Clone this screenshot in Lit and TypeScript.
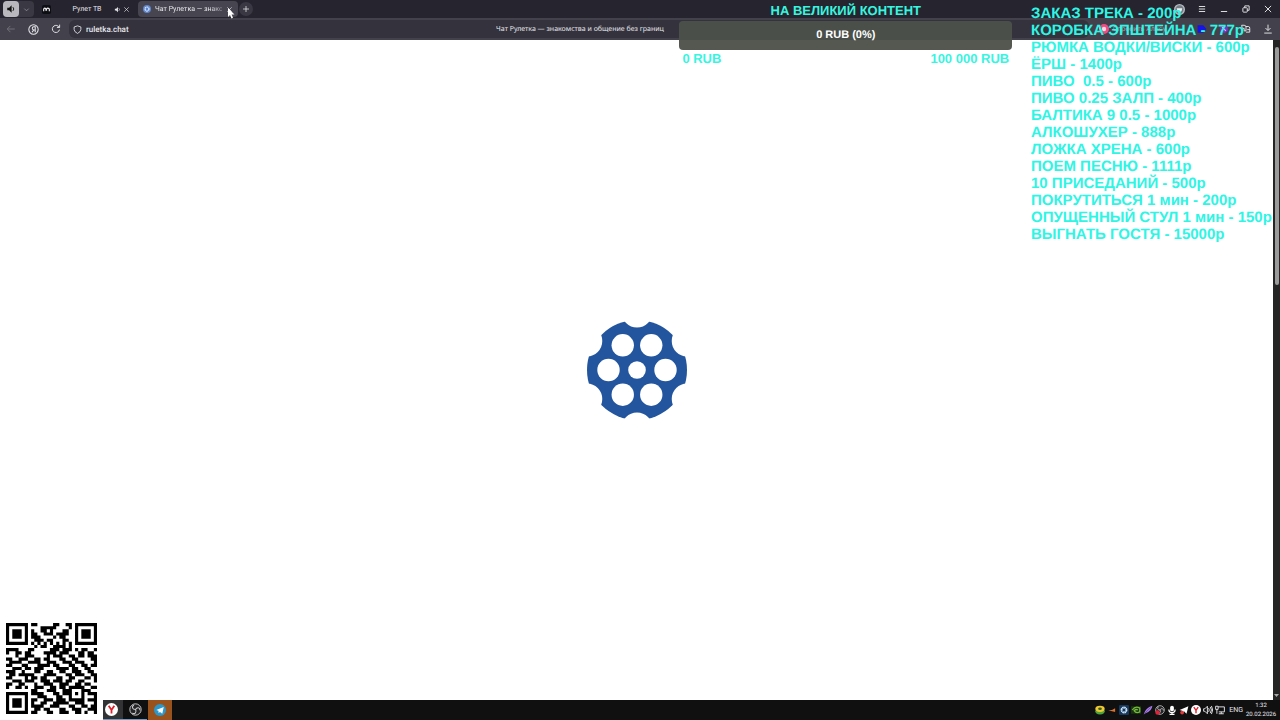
import { LitElement, html, svg, css } from "lit";
import { customElement } from "lit/decorators.js";

const PRICES = [
  "ЗАКАЗ ТРЕКА - 200р",
  "КОРОБКА ЭПШТЕЙНА - 777р",
  "РЮМКА ВОДКИ/ВИСКИ - 600р",
  "ЁРШ - 1400р",
  "ПИВО  0.5 - 600р",
  "ПИВО 0.25 ЗАЛП - 400р",
  "БАЛТИКА 9 0.5 - 1000р",
  "АЛКОШУХЕР - 888р",
  "ЛОЖКА ХРЕНА - 600р",
  "ПОЕМ ПЕСНЮ - 1111р",
  "10 ПРИСЕДАНИЙ - 500р",
  "ПОКРУТИТЬСЯ 1 мин - 200р",
  "ОПУЩЕННЫЙ СТУЛ 1 мин - 150р",
  "ВЫГНАТЬ ГОСТЯ - 15000р",
];

const QR = [
  "11111110110000011001101111111",
  "10000010000111110000101000001",
  "10111010100110100011001011101",
  "10111010110011101111001011101",
  "10111010111000010110001011101",
  "10000010011101100011001000001",
  "11111110101010101010101111111",
  "00000000010110011110100000000",
  "11110001100000111011101011001",
  "10011011000011110111000110110",
  "00010011100001011100110110111",
  "11001110011011000110011000011",
  "01111001111001110011101110001",
  "11000110001111011000110011011",
  "00111011011100001111011001100",
  "11100100011001100110011100110",
  "01101111100011110001101110011",
  "11000010110110001100110001101",
  "00111011100111011101100110001",
  "11001100010011100111001101100",
  "10011010011100110110111110011",
  "00000000110001110011100011100",
  "11111110111100011011101010111",
  "10000010001110001100100010001",
  "10111010110011101110111110111",
  "10111010100110011111001110001",
  "10111010111100111000110011011",
  "10000010011011000110011100111",
  "11111110110001100111001101001",
];

const yandex = svg`<circle cx="8" cy="8" r="8" fill="#fff"/><path d="M4.500 3.500 8 8.500l3.500-5M8 8v5" fill="none" stroke="#e0202c" stroke-width="2.200"/>`;
const obs = svg`<circle cx="8" cy="8" r="7" fill="#242426" stroke="#c9c9cb" stroke-width="1.200"/><path d="M8 8C4 8 3 4.500 6 2.500M8 8c2-3.500 5.500-2.500 5.500.8M8 8c2 3.500-.8 6-4 4.500" fill="none" stroke="#c9c9cb" stroke-width="1.400"/>`;
const icons: Record<string, unknown> = {
  sound: svg`<path d="M2 6h3l4-4v12l-4-4H2z" fill="currentColor"/><path d="M11 5q3 3 0 6" class="line"/>`,
  down: svg`<path d="m3 6 5 5 5-5" class="line"/>`,
  close: svg`<path d="m3 3 10 10M13 3 3 13" class="line"/>`,
  plus: svg`<path d="M8 2v12M2 8h12" class="line"/>`,
  back: svg`<path d="M14 8H2m5-5L2 8l5 5" class="line"/>`,
  yandexHome: svg`<circle cx="8" cy="8" r="6.800" class="line"/><path d="M10.500 12V4H8.500a2.300 2.300 0 0 0 0 4.600h2M8.300 8.600 6 12" class="line"/>`,
  reload: svg`<path d="M13.500 9a5.700 5.700 0 1 1-2-5.500L13.500 5M13.800 1v4.500H9.500" class="line"/>`,
  shield: svg`<path d="M8 1.500 14 3.500V8q0 4-6 7Q2 12 2 8V3.500z" class="line"/>`,
  menu: svg`<path d="M3 4h10M3 8h10M3 12h10" class="line"/>`,
  min: svg`<path d="M3 12h10" class="line"/>`,
  restore: svg`<rect x="3" y="6" width="7" height="7" rx="1" class="line"/><path d="M6 6V3h7v7h-3" class="line"/>`,
  download: svg`<path d="M8 1v9M4 6.500l4 4 4-4M2 14.500h12" class="line"/>`,
  ext: svg`<path d="M1 2h4q3 0 3 3v6H5V7H2zM8 4h4q2 0 2 3v6H8M10 9h4" class="line"/>`,
  site: svg`<rect width="16" height="16" rx="3" fill="#0d0d14"/><path d="M3 11V7q2-3 4 0v3M8 10V7q2-3 5 0v4" fill="none" stroke="#eee" stroke-width="2"/>`,
  roulette: svg`<circle cx="8" cy="8" r="8" fill="#5d86cf"/><circle cx="8" cy="8" r="4" fill="none" stroke="#dfe9fb" stroke-width="2.500" stroke-dasharray="3 1"/>`,
  avatar: svg`<circle cx="8" cy="8" r="7" fill="#747c84" stroke="#b3bac2" stroke-width="2"/><path d="M4 6h8l-1 4-3 3-3-3z" fill="#eef2f4"/>`,
  pink: svg`<circle cx="8" cy="8" r="8" fill="#ed4d82"/><circle cx="8" cy="8" r="3.500" fill="#ffd8e5"/>`,
  blue: svg`<path d="M1 2h9l5 6-5 6H1z" fill="#1513e6"/>`,
  purple: svg`<path d="M2 5 8 1l6 4v6l-6 4-6-4z" fill="#7434c7"/><path d="m5 5 6 6" stroke="#dcb7ff" stroke-width="2"/>`,
  yandex,
  obs,
  obsRec: svg`${obs}<circle cx="4" cy="12" r="3.500" fill="#e32239"/>`,
  telegram: svg`<circle cx="8" cy="8" r="8" fill="#2b98c9"/><path d="m3 8 10-4-2 9-3-2.500-2 1.500V9z" fill="#fff"/>`,
  layers: svg`<ellipse cx="8" cy="10" rx="7.500" ry="5" fill="#4da63c"/><ellipse cx="8" cy="6" rx="7.500" ry="5" fill="#f0c832"/><ellipse cx="8" cy="6" rx="3" ry="2" fill="#365d27"/>`,
  orange: svg`<path d="M2 8h6l5-3v6l-5-1z" fill="#dc712d"/>`,
  gear: svg`<rect width="16" height="16" rx="2" fill="#16385d"/><circle cx="8" cy="8" r="4" fill="none" stroke="#cfe5fa" stroke-width="3" stroke-dasharray="2.500 .6"/>`,
  nvidia: svg`<rect y="2" width="16" height="12" fill="#173310"/><path d="M2 8q5-7 12-3v6q-6 3-9-2 3-3 6-1" fill="none" stroke="#76b93c" stroke-width="2"/>`,
  feather: svg`<path d="M1 15Q4 4 15 1q-1 9-11 12z" fill="#a67be4"/><path d="M2 14 12 4" stroke="#5d3a97"/>`,
  mic: svg`<rect x="5" y="1" width="6" height="9" rx="3" fill="#fff"/><path d="M3 7q0 5 5 5t5-5M8 12v3M4 15h8" fill="none" stroke="#fff" stroke-width="2"/>`,
  plane: svg`<path d="M1 8 15 2l-3 12-4-4-2 3-1-4z" fill="#fff"/><circle cx="5" cy="12" r="3" fill="#e23a3a"/>`,
  volume: svg`<path d="M1 6h2l4-4v12l-4-4H1zM9 5q2 3 0 6M11.500 3q4 5 0 10M13.500 1.500q4 6.500 0 13" class="line"/>`,
  network: svg`<path d="M5 3h10v8H6M10 11v3M6 14h8M1 2v5h4V2zM3 7v7" class="line"/>`,
};

const icon = (name: string, size = 10) => html`
  <svg class="icon" viewBox="0 0 16 16" width=${size} height=${size} aria-hidden="true">${icons[name]}</svg>`;

@customElement("app-root")
export class AppRoot extends LitElement {
  static styles = css`
    :host { display: block; font-family: Roboto, "Noto Sans", sans-serif; font-size: 8px; color: #e8e7ec; text-rendering: geometricPrecision; }
    * { box-sizing: border-box; }
    button { font: inherit; color: inherit; background: none; border: 0; padding: 0; display: flex; align-items: center; justify-content: center; flex: none; text-rendering: inherit; }
    svg { display: block; flex: none; }
    .line { fill: none; stroke: currentColor; stroke-width: 1.500; }
    .screen { position: relative; display: flex; flex-direction: column; height: 100vh; overflow: hidden; background: #fff; }
    .tabs { display: flex; align-items: center; height: 18px; background: #25242f; padding-left: 3px; font-size: 7px; }
    .group { display: flex; height: 16px; border-radius: 4px; background: #393843; }
    .group .speaker { width: 16px; border-radius: 4px; background: #b9b8bc; color: #111; }
    .group .more { width: 15px; color: #a5a4ad; }
    .tab { display: flex; align-items: center; height: 16px; padding: 0 5px; border-radius: 4px; }
    .tab .label { white-space: nowrap; flex: 1; }
    .first { width: 98px; margin: 0 3px; gap: 2px; }
    .first .label { padding-left: 9px; }
    .active { width: 100px; gap: 4px; background: #464550; }
    .active .label { min-width: 0; justify-content: flex-start; mask-image: linear-gradient(90deg, #000 80%, #0006); }
    .add { width: 14px; height: 14px; margin-left: 1px; border-radius: 7px; background: #393843; }
    .window { display: flex; align-items: center; margin-left: auto; padding-right: 7px; gap: 12px; }
    .toolbar { display: flex; align-items: center; height: 22px; background: #43424c; padding: 0 7px 0 6px; gap: 12px; }
    .dim { color: #73727c; }
    .address { display: grid; grid-template-columns: 1fr auto 1fr; align-items: center; flex: 1; height: 18px; margin-left: -4px; padding: 0 2px 0 4px; border-radius: 6px; background: #33323d; }
    .site { display: flex; align-items: center; gap: 4px; min-width: 0; }
    .site input { flex: 1; min-width: 0; border: 0; padding: 0; background: none; color: inherit; font: 500 8px Roboto, sans-serif; text-rendering: inherit; }
    .address .title { font-family: "Noto Sans", sans-serif; font-size: 7px; white-space: nowrap; }
    .alice { display: flex; align-items: center; gap: 4px; width: 86px; margin-left: -2px; color: #a3a2ad; font-size: 7px; justify-content: flex-start; }
    .tools { display: flex; gap: 12px; align-items: center; }
    .page { display: flex; flex: 1; min-height: 0; }
    .loader { display: flex; flex: 1; align-items: center; justify-content: center; }
    .scroll { display: flex; flex-direction: column; align-items: center; justify-content: space-between; width: 7px; background: #252525; }
    .thumb { width: 4px; height: 36%; margin: 7px 0 auto; border-radius: 2px; background: #9b9b9b; }
    .arrow { width: 5px; height: 8px; color: #aaa; }
    .taskbar { display: flex; height: 20px; background: #101011; padding-left: 103px; }
    .task { width: 24px; border-bottom: 1px solid #6f9ac1; }
    .lit { width: 20px; padding-right: 4px; background: #333335; }
    .chat { margin-left: 1px; border-bottom: 0; background: #99521b; }
    .tray { display: flex; align-items: center; gap: 2px; margin-left: auto; padding-right: 5px; font-size: 7px; }
    .tray .lang { padding: 0 2px; }
    .clock { display: flex; flex-direction: column; align-items: center; width: 28px; line-height: 9px; font-size: 6px; white-space: nowrap; }
    .goal { position: absolute; top: 3px; left: calc(53% + 1px); width: 26%; color: #38f5df; font: bold 13px/15px "Liberation Sans", sans-serif; text-align: center; }
    .goal h2 { font: inherit; margin: 0 0 3px; }
    .bar { height: 29px; border-radius: 4px; background: linear-gradient(#4b4f49 65%, #555751 65%); color: #fff; font-size: 11px; line-height: 29px; }
    .range { display: flex; justify-content: space-between; padding: 1px 3px 0 3px; }
    .prices { position: absolute; top: 5px; left: calc(100% - 249px); margin: 0; padding: 0; list-style: none; color: #2ff5e4; font: bold 15px/17px "Liberation Sans", sans-serif; white-space: pre; }
    .qr { position: absolute; left: 0; bottom: 0; padding: 6px; background: #fff; }
    .cursor { position: absolute; left: 228px; top: 8px; }
  `;

  private wheel() {
    const spot = (n: number, r: number, size: number, turn = 0) =>
      Array.from({ length: n }, (_, i) => {
        const a = ((i * 360) / n + turn) * (Math.PI / 180);
        return svg`<circle cx=${50 + r * Math.cos(a)} cy=${50 + r * Math.sin(a)} r=${size} fill="#fff"/>`;
      });
    return html`<svg width="100" height="100" viewBox="0 0 100 100" role="img" aria-label="Загрузка">
      <circle cx="50" cy="50" r="50" fill="#22559d"/>
      ${spot(6, 58, 15.5, 30)}${spot(6, 28.5, 11.2)}<circle cx="50" cy="50" r="8.800" fill="#fff"/>
    </svg>`;
  }

  render() {
    const modules = QR.map((row, y) => [...row].map((v, x) => (v === "1" ? `M${x} ${y}h1v1h-1z` : "")).join("")).join("");
    return html`
      <div class="screen">
        <nav class="tabs">
          <div class="group">
            <button class="speaker" aria-label="Звук">${icon("sound")}</button>
            <button class="more" aria-label="Список вкладок">${icon("down", 7)}</button>
          </div>
          <div class="tab first">${icon("site", 9)}<button class="label">Рулет ТВ</button>
            <button aria-label="Выключить звук">${icon("sound", 7)}</button><button aria-label="Закрыть">${icon("close", 7)}</button></div>
          <div class="tab active">${icon("roulette", 8)}<button class="label">Чат Рулетка — знаком</button>
            <button aria-label="Закрыть">${icon("close", 7)}</button></div>
          <button class="add" aria-label="Новая вкладка">${icon("plus", 8)}</button>
          <div class="window">
            <button aria-label="Профиль">${icon("avatar", 11)}</button>
            ${["menu", "min", "restore", "close"].map((n) => html`<button aria-label=${n}>${icon(n)}</button>`)}
          </div>
        </nav>
        <div class="toolbar">
          <button class="dim" aria-label="Назад">${icon("back")}</button>
          <button aria-label="Яндекс">${icon("yandexHome", 11)}</button>
          <button aria-label="Обновить">${icon("reload")}</button>
          <div class="address">
            <div class="site">${icon("shield", 9)}<input aria-label="Адрес" value="ruletka.chat" /></div>
            <span class="title">Чат Рулетка — знакомства и общение без границ</span>
          </div>
          <button class="alice">${icon("pink")}<span>Спросить Алису</span></button>
          <div class="tools">
            ${["blue", "purple", "ext", "download"].map((n) => html`<button aria-label=${n}>${icon(n)}</button>`)}
          </div>
        </div>
        <main class="page">
          <div class="loader">${this.wheel()}</div>
          <div class="scroll"><div class="thumb"></div>
            <svg class="arrow" viewBox="0 0 5 8"><path d="M0 2h5L2.500 5z" fill="currentColor"/></svg></div>
        </main>
        <footer class="taskbar">
          <button class="task lit" aria-label="Браузер">${icon("yandex", 13)}</button>
          <button class="task" aria-label="OBS">${icon("obs", 13)}</button>
          <button class="task chat" aria-label="Telegram">${icon("telegram", 12)}</button>
          <div class="tray">
            ${["layers", "orange", "gear", "nvidia", "feather", "obsRec", "mic", "plane", "yandex", "volume", "network"].map((n) => icon(n))}
            <span class="lang">ENG</span>
            <time class="clock"><span>1:32</span><span>20.02.2026</span></time>
          </div>
        </footer>
        <section class="goal">
          <h2>НА ВЕЛИКИЙ КОНТЕНТ</h2>
          <div class="bar">0 RUB (0%)</div>
          <div class="range"><span>0 RUB</span><span>100 000 RUB</span></div>
        </section>
        <ul class="prices">${PRICES.map((p) => html`<li>${p}</li>`)}</ul>
        <div class="qr"><svg width="91" height="91" viewBox="0 0 29 29" role="img" aria-label="QR-код"><path d=${modules} fill="#000"/></svg></div>
        <svg class="cursor" width="7" height="11" viewBox="0 0 7 11" aria-hidden="true"><path d="M0 0v9l2-2 1.500 3.500 1.500-.7L3.600 6.500H6.500z" fill="#fff"/></svg>
      </div>`;
  }
}
